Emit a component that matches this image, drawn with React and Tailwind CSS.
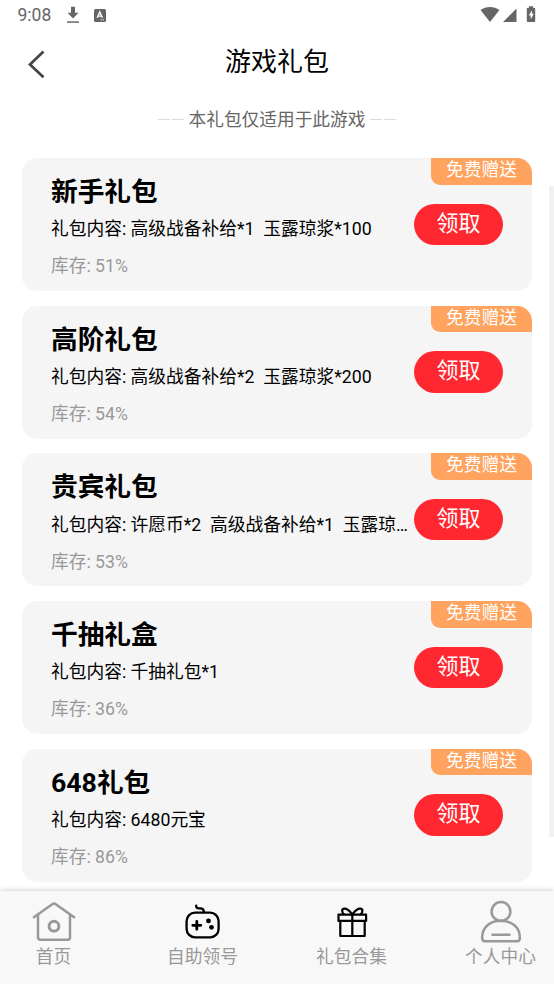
import React from 'react';

const gifts = [
  { title: '新手礼包', content: '高级战备补给*1  玉露琼浆*100', stock: '51%' },
  { title: '高阶礼包', content: '高级战备补给*2  玉露琼浆*200', stock: '54%' },
  { title: '贵宾礼包', content: '许愿币*2  高级战备补给*1  玉露琼…', stock: '53%' },
  { title: '千抽礼盒', content: '千抽礼包*1', stock: '36%' },
  { title: '648礼包', content: '6480元宝', stock: '86%' },
];

function StatusBar() {
  return (
    <div className="flex h-[30px] shrink-0 items-center pl-[17.5px] pr-[18px] text-[#666666]">
      <span className="w-[48.5px] text-[17.5px] leading-[31px]">9:08</span>
      <svg className="h-[18px] w-[14px]" viewBox="0 0 14 18" fill="currentColor">
        <path d="M5 .8h4v6h3.500L7 12.500 1.500 6.800H5z" />
        <path d="M1 15.300h12v1.500H1z" />
      </svg>
      <svg className="ml-[14px] h-[13px] w-[12px]" viewBox="0 0 12 13">
        <rect width="12" height="13" rx="1.500" fill="currentColor" />
        <path d="M3.200 8.700 5.800 3l2.600 5.700M4.200 7.100h3.200" fill="none" stroke="#fff" strokeWidth="1.400" />
        <path d="M6.500 10.800h1.300M8.700 10.800H10" stroke="#fff" strokeWidth=".9" />
      </svg>
      <svg className="ml-auto h-[18px] w-[56px]" viewBox="0 0 56 18" fill="currentColor">
        <path d="M0.500 4C6 0 14 0 19.500 4L10 16z" />
        <path d="M36.500 2.500V16H23z" />
        <path d="M49 .2h4v1.600h1.200q1 0 1 1v12.200q0 1-1 1h-6.400q-1 0-1-1V2.800q0-1 1-1H49z" />
        <path d="M52 4.200 48.800 9.600h1.900v3.900l3-5.700h-1.800z" fill="#fff" />
      </svg>
    </div>
  );
}

function GiftCard({ gift }) {
  return (
    <div className="relative flex h-[133px] shrink-0 items-start overflow-hidden rounded-[15px] bg-[#f5f5f5] pl-[29px] pr-[29px]">
      <div className="w-[363px] shrink-0 pt-[17px]">
        <h2 className="text-[26.7px] leading-[34px] font-bold text-black">{gift.title}</h2>
        <p className="mt-[7.400px] text-[17.73px] leading-[26px] whitespace-pre text-black">
          礼包内容: {gift.content}
        </p>
        <p className="mt-[11px] text-[17.7px] leading-[26px] text-[#999999]">库存: {gift.stock}</p>
      </div>
      <button className="mt-[45.500px] h-[41.500px] w-[89px] shrink-0 rounded-full bg-[#ff2830] pb-[1px] text-[22px] leading-[40.500px] text-white">
        领取
      </button>
      <span className="absolute top-0 right-0 h-[26.500px] w-[101px] rounded-bl-[9px] bg-[#ffa35e] text-center text-[17.7px] leading-[25.500px] text-white">
        免费赠送
      </span>
    </div>
  );
}

function HomeIcon() {
  return (
    <svg className="h-[44px] w-[44px]" viewBox="0 0 44 44" fill="none" stroke="#999" strokeWidth="2.500" strokeLinecap="round" strokeLinejoin="round">
      <path d="M1.900 17.300 20.200 4.200q1.800-1.200 3.600 0L42.100 17.300" />
      <path d="M6 14.500v22.800q0 2.500 2.500 2.500h27q2.500 0 2.500-2.500V14.500" />
      <circle cx="22" cy="26.200" r="4.900" strokeWidth="3" />
    </svg>
  );
}

function GamepadIcon() {
  return (
    <svg className="h-[44px] w-[44px]" viewBox="0 0 44 44" fill="none" stroke="#000" strokeWidth="2.300" strokeLinecap="round" strokeLinejoin="round">
      <rect x="5.600" y="12.600" width="32" height="24.800" rx="8.500" />
      <path d="M15.200 5.700v.8q.4 1.800 2.400 1.800h2.300q3 .5 3 3.800" />
      <path d="M15.800 21.300v8M11.800 25.300h8" strokeWidth="2.800" />
      <circle cx="27.500" cy="20.900" r="2.400" fill="#000" stroke="none" />
      <circle cx="30.500" cy="27.300" r="2.400" fill="#000" stroke="none" />
    </svg>
  );
}

function GiftIcon() {
  return (
    <svg className="h-[44px] w-[44px]" viewBox="0 0 44 44" fill="none" stroke="#000" strokeWidth="2.200" strokeLinejoin="round">
      <rect x="8.500" y="14.700" width="27.600" height="6.200" />
      <path d="M10.300 21v15h24.400V21M22.300 14.700V36" />
      <path d="M14 14.500C11.500 12 11.500 8.700 14.500 8.700c3.500 0 5.500 2.800 7.800 5.800C24.600 11.500 26.600 8.700 30.100 8.700c3 0 3 3.300.5 5.800" />
    </svg>
  );
}

function UserIcon() {
  return (
    <svg className="h-[44px] w-[44px]" viewBox="0 0 44 44" fill="none" stroke="#999" strokeWidth="2.500" strokeLinecap="round" strokeLinejoin="round">
      <circle cx="22" cy="11.500" r="9.400" />
      <path d="M22 20.800C10.500 20.800 3.200 28 3.200 37v1.200q0 3 3 3h31.600q3 0 3-3V37C40.800 28 33.500 20.800 22 20.800Z" />
      <path d="M13.500 34.700h17" />
    </svg>
  );
}

const tabs = [
  { label: '首页', icon: <HomeIcon /> },
  { label: '自助领号', icon: <GamepadIcon /> },
  { label: '礼包合集', icon: <GiftIcon /> },
  { label: '个人中心', icon: <UserIcon /> },
];

function TabBar() {
  return (
    <nav className="relative flex h-[93px] shrink-0 justify-between bg-[#f8f8f8] px-[17.500px] pt-[9px] shadow-[0_-1px_5px_rgba(0,0,0,0.18)]">
      {tabs.map((tab) => (
        <a key={tab.label} className="flex w-[72px] flex-col items-center">
          {tab.icon}
          <span className="text-[17.7px] leading-[26px] whitespace-nowrap text-[#999999]">{tab.label}</span>
        </a>
      ))}
    </nav>
  );
}

function App() {
  return (
    <div className="relative flex h-[984px] w-[554px] flex-col overflow-hidden bg-white font-[Roboto,'Noto_Sans_CJK_SC',sans-serif]">
      <StatusBar />
      <header className="grid h-[68px] shrink-0 grid-cols-[60px_1fr_60px] items-center">
        <svg className="ml-[27px] h-[30px] w-[20px]" viewBox="0 0 20 30" fill="none" stroke="#444" strokeWidth="2.700">
          <path d="M16.500 2.500 3 15.500l13.500 12.700" />
        </svg>
        <h1 className="pb-[5px] text-center text-[26px] leading-[34px] text-black">游戏礼包</h1>
      </header>
      <div className="flex h-[42px] shrink-0 items-center justify-center gap-[5px] pt-[2px] text-[17.7px] text-[#666666]">
        <span className="flex gap-[2px] pb-[2px]">
          <i className="h-px w-[12px] bg-[#dddddd]" />
          <i className="h-px w-[12px] bg-[#dddddd]" />
        </span>
        本礼包仅适用于此游戏
        <span className="flex gap-[2px] pb-[2px]">
          <i className="h-px w-[12px] bg-[#dddddd]" />
          <i className="h-px w-[12px] bg-[#dddddd]" />
        </span>
      </div>
      <main className="flex min-h-0 flex-1 flex-col gap-[14.7px] overflow-hidden px-[22px] pt-[18px]">
        {gifts.map((gift) => (
          <GiftCard key={gift.title} gift={gift} />
        ))}
      </main>
      <TabBar />
      <div className="absolute top-[186px] right-0 h-[651px] w-[5px] bg-[#f1f1f1]" />
    </div>
  );
}

export default App;
